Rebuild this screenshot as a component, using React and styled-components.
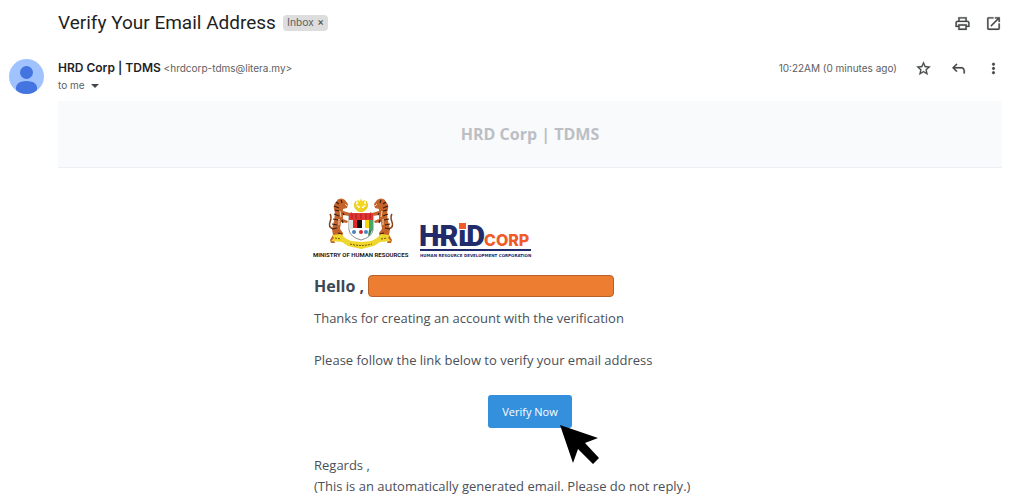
import React from "react";
import styled, { createGlobalStyle } from "styled-components";

const GlobalStyle = createGlobalStyle`
  * { box-sizing: border-box; }
  body {
    margin: 0;
    background: #ffffff;
    color: #1f1f1f;
    font-family: "Open Sans", "Noto Sans", sans-serif;
    overflow: hidden;
  }
  p, h1, h2 { margin: 0; }
`;

const Page = styled.main`
  padding: 0 8px;
`;

const SubjectBar = styled.header`
  display: flex;
  align-items: center;
  height: 46px;
  padding-left: 50px;
`;

const Subject = styled.h1`
  font: 400 19px/28px "Roboto", sans-serif;
  color: #1f1f1f;
`;

const Label = styled.span`
  display: flex;
  align-items: center;
  gap: 4px;
  height: 16px;
  margin-left: 7px;
  padding: 0 4px;
  border-radius: 4px;
  background: #dddddd;
  color: #666666;
  font: 400 11px/16px "Roboto", sans-serif;
`;

const PlainButton = styled.button`
  display: flex;
  align-items: center;
  justify-content: center;
  padding: 0;
  border: 0;
  background: none;
  color: #444746;
  font: inherit;
`;

const IconButton = styled(PlainButton)`
  width: 18px;
  height: 18px;
`;

const Actions = styled.div`
  display: flex;
  align-items: center;
  gap: ${({ $gap }) => $gap}px;
  margin-left: auto;
`;

const Sender = styled.section`
  display: flex;
  align-items: flex-start;
  height: 55px;
  padding-top: 13px;
`;

const Avatar = styled.svg`
  width: 36px;
  height: 36px;
  margin-right: 14px;
`;

const SenderText = styled.div`
  font: 400 10px/17px "Inter", sans-serif;
  color: #5e5e5e;
`;

const Name = styled.strong`
  font-size: 12px;
  font-weight: 600;
  color: #1f1f1f;
`;

const Recipient = styled(PlainButton)`
  gap: 6px;
  color: #5e5e5e;
`;

const Time = styled.time`
  color: #5e5e5e;
  font: 400 10px/18px "Inter", sans-serif;
`;

const Banner = styled.div`
  margin-left: 50px;
  height: 67px;
  border-bottom: 1px solid #edeff2;
  background: #f8fafc;
  color: #bbbfc3;
  font-size: 16px;
  font-weight: 700;
  line-height: 67px;
  text-align: center;
`;

const MessageArea = styled.div`
  margin-left: 50px;
`;

const Message = styled.article`
  max-width: 432px;
  margin: 28px auto 0;
  color: #4a5058;
  font-size: 13px;
  line-height: 21px;
`;

const Logos = styled.div`
  display: flex;
  align-items: flex-end;
  gap: 10px;
  height: 63px;
`;

const Greeting = styled.h2`
  display: flex;
  align-items: center;
  gap: 4px;
  height: 22px;
  margin: 16px 0 11px;
  color: #3d4852;
  font-size: 16px;
  line-height: 22px;
`;

const Redacted = styled.span`
  width: 246px;
  height: 22px;
  border: 1px solid #b5622a;
  border-radius: 4px;
  background: #ed7d31;
`;

const Paragraph = styled.p`
  margin-bottom: 21px;
`;

const VerifyRow = styled.div`
  display: flex;
  justify-content: center;
  margin: 24px 0 27px;
`;

const VerifyLink = styled.a`
  position: relative;
  width: 84px;
  height: 33px;
  border-radius: 3px;
  background: #3490dc;
  color: #ffffff;
  font-size: 11px;
  line-height: 34px;
  text-align: center;
  text-decoration: none;
`;

const Pointer = styled.svg`
  position: absolute;
  top: 30px;
  left: 72px;
  width: 40px;
  height: 40px;
`;

function Crest() {
  return (
    <svg width="96" height="62" viewBox="0 0 96 62" overflow="visible" role="img" aria-label="Ministry of Human Resources">
      <path d="M42 4A6.500 6.500 0 1 0 52 4A5.500 5.500 0 1 1 42 4z" fill="#f0d419" stroke="#e8cb20" strokeWidth="1" />
      <path d="M47 1l1 3 3-1-1 3 2 2-3 1-2 3-2-3-3-1 2-2-1-3 3 1z" fill="#f4d820" />
      {[false, true].map((flip) => (
        <g key={String(flip)} transform={flip ? "translate(94 0) scale(-1 1)" : undefined}>
          <path d="M19 32q-5-2-3-7t0-8" fill="none" stroke="#8a4118" strokeWidth="1.500" />
          <path d="M23 3q4-3 8 0l3 4-1 4-4 1 0 2 7 2 2-1 0 3-3 1-6-1 0 4 5 2-1 2-6-1-1 7 3 4-1 5 2 2-5 1-2-5-3 4 1 3h-4l-1-3 3-5-1-6 2-8 1-8-1-4q-1-5 3-8z" fill="#c4632a" />
          <path d="M22 5l3 2M20 9l5 2M21 13l4 1M20 17l5 2M19 22l5 1M18 27l5 1M18 32l5-1M24 36l4 1M27 3l1 3M29 16l1 2M28 23l1 3" stroke="#3b1b10" strokeWidth="1.200" />
          <path d="M31 7l2 2M26 14l1 6M25 22l0 6" stroke="#f0d7bd" strokeWidth="1" />
        </g>
      ))}
      <path d="M35 17h24v16q-1 7-12 10Q36 40 35 33z" fill="#ffffff" stroke="#8d8d8d" />
      <path d="M35 16h24v7H35z" fill="#e23432" />
      <path d="M38 17v5M42 17v5M47 17v5M52 17v5M56 17v5" stroke="#a21f20" />
      <path d="M39 23h4v8h-4z" fill="#e32726" />
      <path d="M43 23h5v8h-5z" fill="#101010" />
      <path d="M48 23h3v8h-3z" fill="#ffffff" />
      <path d="M51 23h4v8h-4z" fill="#f2d800" />
      <path d="M35 23h4v9h-4z" fill="#d9e6e1" />
      <path d="M55 23h4v10h-4z" fill="#48a56a" />
      <circle cx="40" cy="35" r="2" fill="#4b83bb" />
      <circle cx="47" cy="35" r="2" fill="#d92c35" />
      <circle cx="52" cy="35" r="2" fill="#4b83bb" />
      <path d="M55 33h3l-2 5-2 1z" fill="#288659" />
      <path d="M18 38l9-1q4 5 10 7l10 1 10-1q6-2 10-7l9 1-2 3 3 3-11 1-6 4-13 3-13-3-6-4-11-1 3-3z" fill="#f0d62c" />
      <path d="M21 41l6 1M36 47q11 3 22 0M67 42l6-1" fill="none" stroke="#6f5d09" strokeDasharray="2 1" />
      <text x="-1" y="60" fontFamily="Roboto, sans-serif" fontSize="6" fontWeight="700" fill="#222222">MINISTRY OF HUMAN RESOURCES</text>
    </svg>
  );
}

function CorpLogo() {
  return (
    <svg width="112" height="37" viewBox="0 0 112 37" overflow="visible" role="img" aria-label="HRD Corp, Human Resource Development Corporation">
      <text x="-1" y="24" fontFamily="Roboto, sans-serif" fontWeight="900" fontSize="29" fill="#232c6b">HRiD</text>
      <path d="M14 12h11v4H14zM40 20h10v4H40z" fill="#232c6b" />
      <text x="64" y="24" fontFamily="Inter, sans-serif" fontWeight="800" fontSize="16" fill="#f15a29">CORP</text>
      <path d="M39 1h7v6h-7z" fill="#f15a29" />
      <path d="M0 27h111v2H0z" fill="#232c6b" />
      <text x="0" y="35" fontFamily="DejaVu Sans, sans-serif" fontSize="4" fontWeight="700" fill="#232c6b">HUMAN RESOURCE DEVELOPMENT CORPORATION</text>
    </svg>
  );
}

const icons = {
  print: "M19 8h-1V3H6v5H5c-1.660 0-3 1.340-3 3v6h4v4h12v-4h4v-6c0-1.660-1.340-3-3-3zM8 5h8v3H8V5zm8 14H8v-4h8v4zm2-4v-2H6v2H4v-4c0-.55.45-1 1-1h14c.55 0 1 .45 1 1v4h-2z",
  open: "M19 19H5V5h7V3H5c-1.110 0-2 .9-2 2v14c0 1.100.89 2 2 2h14c1.100 0 2-.9 2-2v-7h-2v7zM14 3v2h3.590l-9.830 9.830 1.410 1.410L19 6.410V10h2V3h-7z",
  star: "M22 9.240l-7.190-.62L12 2 9.190 8.630 2 9.240l5.460 4.730L5.820 21 12 17.270 18.180 21l-1.630-7.030L22 9.240zM12 15.400l-3.760 2.270 1-4.280-3.320-2.880 4.380-.38L12 6.100l1.710 4.040 4.380.38-3.320 2.880 1 4.280L12 15.400z",
  reply: "M19 19v-4c0-1.700-1.300-3-3-3H6.800l3.600 3.600L9 17l-6-6 6-6 1.400 1.400L6.800 10H16c2.800 0 5 2.200 5 5v4h-2z",
  more: "M12 8c1.100 0 2-.9 2-2s-.9-2-2-2-2 .9-2 2 .9 2 2 2zm0 2c-1.100 0-2 .9-2 2s.9 2 2 2 2-.9 2-2-.9-2-2-2zm0 6c-1.100 0-2 .9-2 2s.9 2 2 2 2-.9 2-2-.9-2-2-2z",
};

function Action({ icon, label }) {
  return (
    <IconButton type="button" aria-label={label}>
      <svg width="17" height="17" viewBox="0 0 24 24" fill="currentColor" stroke="currentColor" strokeWidth="0.300" aria-hidden="true"><path d={icons[icon]} /></svg>
    </IconButton>
  );
}

export default function App() {
  return (
    <Page>
      <GlobalStyle />
      <SubjectBar>
        <Subject>Verify Your Email Address</Subject>
        <Label>Inbox <PlainButton type="button" aria-label="Remove label Inbox">×</PlainButton></Label>
        <Actions $gap={13}>
          <Action icon="print" label="Print" />
          <Action icon="open" label="Open in new window" />
        </Actions>
      </SubjectBar>
      <Sender>
        <Avatar viewBox="0 0 36 36" aria-hidden="true">
          <circle cx="18.500" cy="17.500" r="17.500" fill="#a0c3ff" />
          <circle cx="18.500" cy="13.500" r="6.500" fill="#4374e0" />
          <path d="M8 31v-3q1-6 10.500-6T29 28v3q-4 4-10.500 4T8 31z" fill="#4374e0" />
        </Avatar>
        <SenderText>
          <div><Name>HRD Corp | TDMS</Name> &lt;hrdcorp-tdms@litera.my&gt;</div>
          <Recipient type="button">to me <svg width="8" height="4" viewBox="0 0 8 4" aria-hidden="true"><path d="M0 0h8L4 4z" fill="#444746" /></svg></Recipient>
        </SenderText>
        <Actions $gap={17}>
          <Time>10:22AM (0 minutes ago)</Time>
          <Action icon="star" label="Star" />
          <Action icon="reply" label="Reply" />
          <Action icon="more" label="More" />
        </Actions>
      </Sender>
      <Banner>HRD Corp | TDMS</Banner>
      <MessageArea>
        <Message>
          <Logos><Crest /><CorpLogo /></Logos>
          <Greeting>Hello , <Redacted /></Greeting>
          <Paragraph>Thanks for creating an account with the verification</Paragraph>
          <Paragraph>Please follow the link below to verify your email address</Paragraph>
          <VerifyRow>
            <VerifyLink href="#verify">
              Verify Now
              <Pointer viewBox="0 0 40 40" aria-hidden="true"><path d="M0 0l38 13-13 5 14 15-6 6-15-15-5 14z" fill="#000000" /></Pointer>
            </VerifyLink>
          </VerifyRow>
          <p>Regards ,</p>
          <p>(This is an automatically generated email. Please do not reply.)</p>
        </Message>
      </MessageArea>
    </Page>
  );
}
